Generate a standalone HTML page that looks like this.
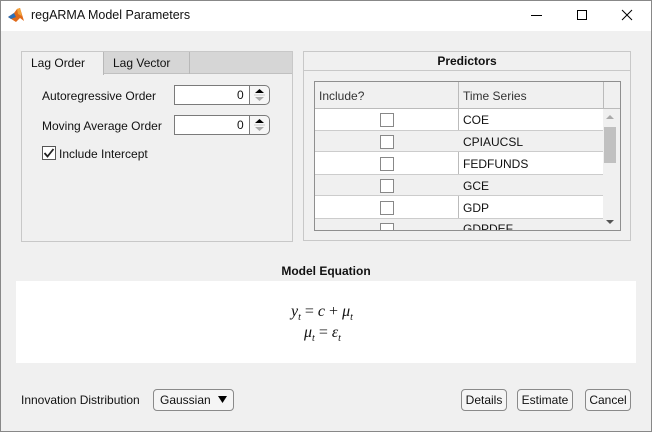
<!DOCTYPE html>
<html><head><style>
*{box-sizing:border-box;margin:0;padding:0}
body{width:652px;height:432px;background:#f0f0f0;font-family:"Liberation Sans",Arial,sans-serif;font-size:12px;color:#111;position:relative;overflow:hidden}
.a{position:absolute}
.t{position:absolute;white-space:nowrap}
.cb{position:absolute;width:14px;height:14px;border:1px solid #888;background:#fff}
.btn{position:absolute;height:22px;border:1px solid #8a8a8a;border-radius:4px;background:#f5f5f5;text-align:center;line-height:20px;font-size:12px}
</style></head><body>
<div class="a" style="left:0;top:0;width:652px;height:31px;background:#fff"></div>
<svg class="a" style="left:8px;top:7px" width="17" height="16" viewBox="0 0 17 16"><polygon points="0,10 6,6 9,2 12,1 16,14 12,11 8,15" fill="#e06a1a"/><polygon points="0,10 6,6 8,10 3,12" fill="#2b6fb8"/><polygon points="9,2 12,1 14,9 10,7" fill="#f2a23a"/></svg>
<div class="t" style="left:31px;top:8px;font-size:12.5px">regARMA Model Parameters</div>
<div class="a" style="left:531px;top:15px;width:11px;height:1px;background:#000"></div>
<div class="a" style="left:577px;top:10px;width:10px;height:10px;border:1px solid #000"></div>
<svg class="a" style="left:621px;top:9px" width="12" height="12"><path d="M1 1L11 11M11 1L1 11" stroke="#000" stroke-width="1"/></svg>

<!-- left panel -->
<div class="a" style="left:21px;top:51px;width:272px;height:191px;border:1px solid #c8c8c8"></div>
<div class="a" style="left:22px;top:52px;width:270px;height:22px;background:#d6d6d6;border-bottom:1px solid #c0c0c0"></div>
<div class="a" style="left:22px;top:52px;width:82px;height:23px;background:#f0f0f0;border-right:1px solid #b8b8b8"></div>
<div class="a" style="left:189px;top:52px;width:1px;height:22px;background:#b8b8b8"></div>
<div class="t" style="left:31px;top:56px">Lag Order</div>
<div class="t" style="left:113px;top:56px">Lag Vector</div>
<div class="t" style="left:42px;top:89px">Autoregressive Order</div>
<div class="t" style="left:42px;top:119px">Moving Average Order</div>
<div class="a" style="left:174px;top:85px;width:76px;height:20px;background:#fff;border:1px solid #7a7a7a"></div>
<div class="t" style="left:237px;top:88px">0</div>
<div class="a" style="left:249px;top:85px;width:21px;height:20px;border:1px solid #7a7a7a;border-radius:0 5px 5px 0;background:#f6f6f6"></div>
<svg class="a" style="left:254px;top:87px" width="11" height="16"><path d="M1 6L5.5 2L10 6Z" fill="#000"/><path d="M1 10L5.5 14L10 10Z" fill="#aaa"/><path d="M0 8H11" stroke="#ccc"/></svg>
<div class="a" style="left:174px;top:115px;width:76px;height:20px;background:#fff;border:1px solid #7a7a7a"></div>
<div class="t" style="left:237px;top:118px">0</div>
<div class="a" style="left:249px;top:115px;width:21px;height:20px;border:1px solid #7a7a7a;border-radius:0 5px 5px 0;background:#f6f6f6"></div>
<svg class="a" style="left:254px;top:117px" width="11" height="16"><path d="M1 6L5.5 2L10 6Z" fill="#000"/><path d="M1 10L5.5 14L10 10Z" fill="#aaa"/><path d="M0 8H11" stroke="#ccc"/></svg>
<div class="cb" style="left:42px;top:146px;border-color:#555"></div>
<svg class="a" style="left:42px;top:146px" width="14" height="14"><path d="M2.5 7L5.5 10.5L11.5 3" stroke="#222" stroke-width="1.8" fill="none"/></svg>
<div class="t" style="left:59px;top:147px">Include Intercept</div>

<!-- right panel -->
<div class="a" style="left:303px;top:51px;width:328px;height:190px;border:1px solid #c8c8c8"></div>
<div class="a" style="left:304px;top:70px;width:326px;height:1px;background:#c8c8c8"></div>
<div class="t" style="left:303px;top:54px;width:328px;text-align:center;font-weight:bold">Predictors</div>
<div class="a" style="left:314px;top:81px;width:307px;height:150px;border:1px solid #8f8f8f;background:#fff;overflow:hidden">
 <div class="a" style="left:0;top:0;width:305px;height:27px;background:#f0f0f0;border-bottom:1px solid #bbb"></div>
 <div class="t" style="left:4px;top:7px;color:#333">Include?</div>
 <div class="t" style="left:148px;top:7px;color:#333">Time Series</div>
 <div class="a" style="left:143px;top:0;width:1px;height:150px;background:#bbb"></div>
 <div class="a" style="left:288px;top:0;width:1px;height:27px;background:#bbb"></div>
 <div class="a" style="left:0;top:48px;width:288px;height:22px;background:#f0f0f0;border-top:1px solid #ccc;border-bottom:1px solid #ccc"></div>
 <div class="a" style="left:0;top:92px;width:288px;height:22px;background:#f0f0f0;border-top:1px solid #ccc;border-bottom:1px solid #ccc"></div>
 <div class="a" style="left:0;top:136px;width:288px;height:22px;background:#f0f0f0;border-top:1px solid #ccc"></div>
 <div class="cb" style="left:65px;top:31px"></div><div class="t" style="left:148px;top:31px">COE</div>
 <div class="cb" style="left:65px;top:53px"></div><div class="t" style="left:148px;top:53px">CPIAUCSL</div>
 <div class="cb" style="left:65px;top:75px"></div><div class="t" style="left:148px;top:75px">FEDFUNDS</div>
 <div class="cb" style="left:65px;top:97px"></div><div class="t" style="left:148px;top:97px">GCE</div>
 <div class="cb" style="left:65px;top:119px"></div><div class="t" style="left:148px;top:119px">GDP</div>
 <div class="cb" style="left:65px;top:141px"></div><div class="t" style="left:148px;top:140px">GDPDEF</div>
 <div class="a" style="left:288px;top:27px;width:17px;height:123px;background:#f0f0f0"></div>
 <div class="a" style="left:289px;top:45px;width:12px;height:36px;background:#c0c0c0"></div>
 <svg class="a" style="left:291px;top:32px" width="8" height="6"><path d="M0 5L4 1L8 5Z" fill="#aaa"/></svg>
 <svg class="a" style="left:291px;top:137px" width="8" height="6"><path d="M0 1L4 5L8 1Z" fill="#555"/></svg>
</div>

<div class="t" style="left:0;top:264px;width:652px;text-align:center;font-weight:bold">Model Equation</div>
<div class="a" style="left:16px;top:281px;width:620px;height:82px;background:#fff"></div>
<div class="t" style="left:291px;top:303px;font-family:'Liberation Serif',serif;font-size:16px;font-style:italic">y<sub style="font-size:10px">t</sub> <span style="font-style:normal">= </span>c <span style="font-style:normal">+ </span>μ<sub style="font-size:10px">t</sub></div>
<div class="t" style="left:304px;top:324px;font-family:'Liberation Serif',serif;font-size:16px;font-style:italic">μ<sub style="font-size:10px">t</sub> <span style="font-style:normal">= </span>ε<sub style="font-size:10px">t</sub></div>

<div class="t" style="left:21px;top:393px">Innovation Distribution</div>
<div class="btn" style="left:153px;top:389px;width:81px;text-align:left;padding-left:6px">Gaussian</div>
<svg class="a" style="left:218px;top:395px" width="9" height="8"><path d="M0 1H9L4.5 8Z" fill="#000"/></svg>
<div class="btn" style="left:461px;top:389px;width:46px">Details</div>
<div class="btn" style="left:517px;top:389px;width:56px">Estimate</div>
<div class="btn" style="left:585px;top:389px;width:46px">Cancel</div>
<div class="a" style="left:0;top:0;width:652px;height:432px;border:1px solid #888;pointer-events:none"></div>
</body></html>
